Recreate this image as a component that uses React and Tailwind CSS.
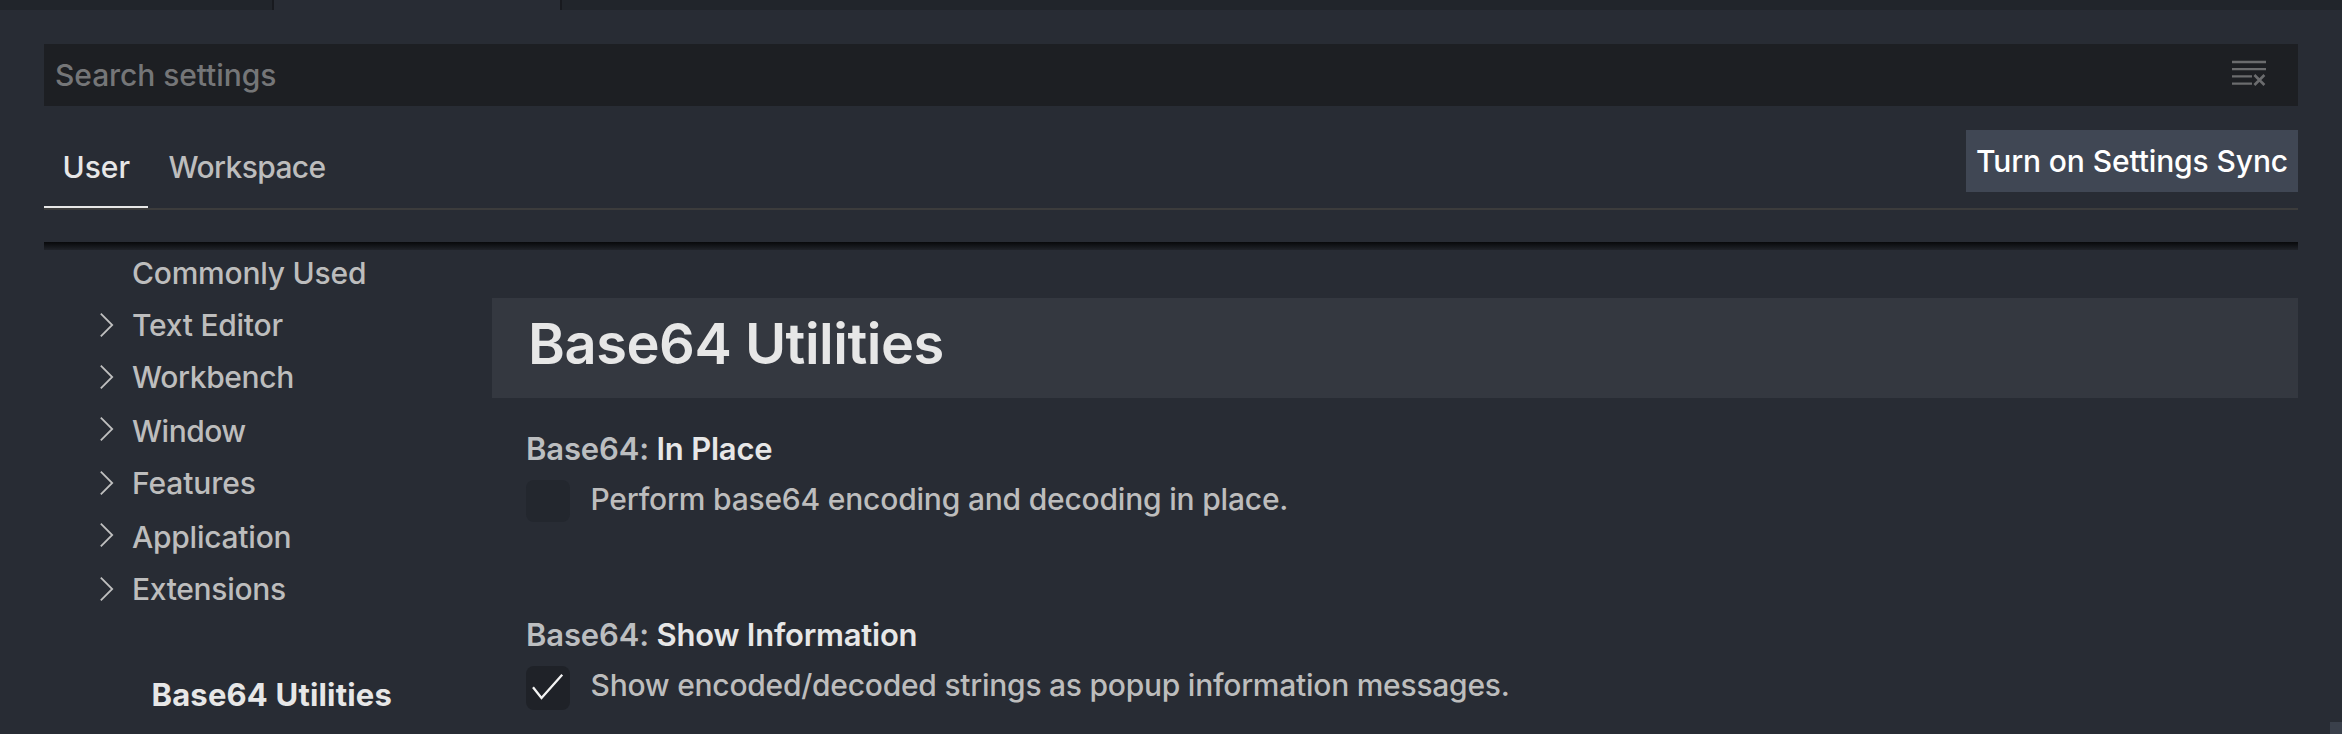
import React from 'react';

const sections = [
  { label: 'Commonly Used', leaf: true, spacing: 'tracking-[-0.22px]' },
  { label: 'Text Editor', spacing: 'tracking-[-0.25px]' },
  { label: 'Workbench', spacing: 'tracking-[-0.35px]' },
  { label: 'Window', tall: true, spacing: 'tracking-[-0.5px]' },
  { label: 'Features', spacing: 'tracking-[-0.1px]' },
  { label: 'Application', tall: true, spacing: 'tracking-[-0.25px]' },
  { label: 'Extensions', spacing: 'tracking-[-0.32px]' },
];

function Chevron() {
  return (
    <svg className="mt-[13px] h-[26px] w-[16px]" viewBox="0 0 16 26" fill="none" stroke="#bfbfbf" strokeWidth="1.8">
      <path d="M1.8 1.6L13.2 13L1.8 24.4" />
    </svg>
  );
}

function ClearIcon() {
  return (
    <svg className="h-[26px] w-[34px]" viewBox="0 0 34 26" fill="none" stroke="#6b6c6e">
      <path d="M0 2H34M0 9.2H34M0 16.4H20M0 23.6H20" strokeWidth="2.3" />
      <path d="M22.4 15L32.4 25M32.4 15L22.4 25" strokeWidth="2.6" />
    </svg>
  );
}

function Section({ label, leaf, tall, spacing }) {
  return (
    <li className={tall ? 'flex h-[54px]' : 'flex h-[52px]'}>
      <span className="w-[33px] shrink-0">{!leaf && <Chevron />}</span>
      <span className={`leading-[52px] whitespace-nowrap ${tall ? 'pt-[2px]' : ''} ${spacing}`}>{label}</span>
    </li>
  );
}

function Setting({ name, nameSpacing, text, textSpacing, checked }) {
  return (
    <section className="h-[186px]">
      <h3 className="flex h-[44px] gap-[10px] pt-px pl-px text-[31px] leading-[44px] font-semibold whitespace-nowrap">
        <span className="w-[120.5px] tracking-[-0.15px] text-[#bcbec0]">Base64:</span>
        <span className={`text-[#e7e7e7] ${nameSpacing}`}>{name}</span>
      </h3>
      <div className="flex">
        <span
          className={`mt-[10px] ml-px flex w-[44px] shrink-0 rounded-[8px] ${
            checked ? 'h-[44px] bg-[#1f2228]' : 'h-[42px] bg-[#23272e]'
          }`}
        >
          {checked && (
            <svg className="h-[44px] w-[44px]" viewBox="0 0 44 44" fill="none" stroke="#f4f4f4" strokeWidth="2.3">
              <path d="M7 21.3L15.5 32L36.2 8.8" />
            </svg>
          )}
        </span>
        <p className={`ml-[20.5px] pt-[7px] leading-[44px] whitespace-nowrap ${textSpacing}`}>{text}</p>
      </div>
    </section>
  );
}

export default function App() {
  return (
    <div className="flex h-[734px] w-[2342px] flex-col overflow-hidden bg-[#282c34] font-['Inter',sans-serif] text-[30px] font-[450] text-[#bdbdbd]">
      <div className="flex h-[10px] shrink-0">
        <div className="w-[274px] border-r-2 border-[#181a1f] bg-[#21252b]" />
        <div className="w-[286px]" />
        <div className="flex-1 border-l-2 border-[#181a1f] bg-[#21252b]" />
      </div>

      <div className="mx-[44px] mt-[34px] flex h-[62px] shrink-0 justify-between bg-[#1d1f23] pr-[32px] pl-[11px]">
        <span className="leading-[62px] tracking-[-0.08px] text-[#757678]">Search settings</span>
        <span className="pt-[16px]">
          <ClearIcon />
        </span>
      </div>

      <div className="mx-[44px] mt-[24px] flex h-[80px] shrink-0 justify-between border-b-2 border-[#3c3c3c]">
        <div className="flex">
          <span className="h-[78px] w-[104px] border-b-2 border-[#e7e7e7] pl-[18.5px] leading-[74px] text-[#e7e7e7]">
            User
          </span>
          <span className="pl-[20.5px] leading-[74px] tracking-[-0.6px]">Workspace</span>
        </div>
        <button className="h-[62px] w-[332px] bg-[#404754] pl-[10px] text-left leading-[62px] tracking-[-0.12px] whitespace-nowrap text-white">
          Turn on Settings Sync
        </button>
      </div>

      <div className="mx-[44px] mt-[32px] h-[8px] shrink-0 bg-linear-to-b from-[#08090b] to-[#202329]" />

      <div className="flex h-[484px] shrink-0">
        <nav className="w-[492px] shrink-0 pl-[99px]">
          <ul className="-mt-[3px]">
            {sections.map((s) => (
              <Section key={s.label} {...s} />
            ))}
          </ul>
          <p className="mt-[54px] pl-[52.5px] text-[31px] leading-[52px] font-bold tracking-[0.18px] text-[#e7e7e7]">
            Base64 Utilities
          </p>
        </nav>

        <main className="w-[1806px] pt-[48px]">
          <h2 className="h-[100px] bg-[#343840] pl-[36px] text-[56px] leading-[92px] font-semibold tracking-[-0.47px] text-[#e7e7e7]">
            Base64 Utilities
          </h2>
          <div className="pt-[28px] pl-[33px]">
            <Setting
              name="In Place"
              nameSpacing="tracking-[-0.22px]"
              text="Perform base64 encoding and decoding in place."
              textSpacing="tracking-[-0.2px]"
            />
            <Setting
              name="Show Information"
              nameSpacing="tracking-[-0.22px]"
              text="Show encoded/decoded strings as popup information messages."
              textSpacing="tracking-[-0.25px]"
              checked
            />
          </div>
        </main>

        <div className="ml-[32px] h-[12px] w-[12px] self-end bg-[#3a404b]" />
      </div>
    </div>
  );
}
